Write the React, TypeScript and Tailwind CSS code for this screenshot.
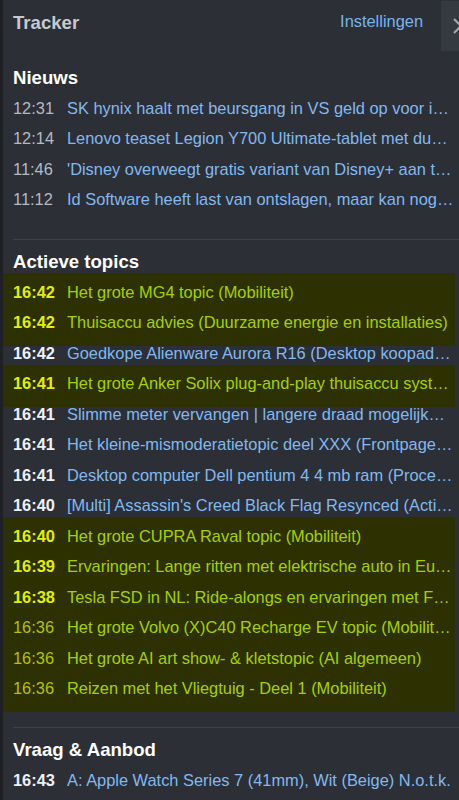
import React from 'react';

type Topic = {
  time: string;
  title: string;
  hot?: boolean; // highlighted (followed) topic
  dim?: boolean; // older highlighted entry, regular weight time
};

const news = [
  { time: '12:31', title: 'SK hynix haalt met beursgang in VS geld op voor investeringen' },
  { time: '12:14', title: 'Lenovo teaset Legion Y700 Ultimate-tablet met dubbele batterij' },
  { time: '11:46', title: "'Disney overweegt gratis variant van Disney+ aan te bieden'" },
  { time: '11:12', title: 'Id Software heeft last van ontslagen, maar kan nog steeds games maken' },
];

const topics: Topic[] = [
  { time: '16:42', title: 'Het grote MG4 topic (Mobiliteit)', hot: true },
  { time: '16:42', title: 'Thuisaccu advies (Duurzame energie en installaties)', hot: true },
  { time: '16:42', title: 'Goedkope Alienware Aurora R16 (Desktop koopadvies)' },
  { time: '16:41', title: 'Het grote Anker Solix plug-and-play thuisaccu systeem topic', hot: true },
  { time: '16:41', title: 'Slimme meter vervangen | langere draad mogelijk… (Elektra)' },
  { time: '16:41', title: 'Het kleine-mismoderatietopic deel XXX (Frontpage-feedback)' },
  { time: '16:41', title: 'Desktop computer Dell pentium 4 4 mb ram (Processors)' },
  { time: '16:40', title: "[Multi] Assassin's Creed Black Flag Resynced (Actie & Avontuur)" },
  { time: '16:40', title: 'Het grote CUPRA Raval topic (Mobiliteit)', hot: true },
  { time: '16:39', title: 'Ervaringen: Lange ritten met elektrische auto in Europa', hot: true },
  { time: '16:38', title: 'Tesla FSD in NL: Ride-alongs en ervaringen met FSD Supervised', hot: true },
  { time: '16:36', title: 'Het grote Volvo (X)C40 Recharge EV topic (Mobiliteit)', hot: true, dim: true },
  { time: '16:36', title: 'Het grote AI art show- & kletstopic (AI algemeen)', hot: true, dim: true },
  { time: '16:36', title: 'Reizen met het Vliegtuig - Deel 1 (Mobiliteit)', hot: true, dim: true },
];

const Heading = ({ children }: { children: React.ReactNode }) => (
  <h2 className="pl-[13px] h-[24px] leading-[24px] mb-[3px] text-[18.6px] font-bold text-white">{children}</h2>
);

const Divider = () => <div className="ml-[13px] h-px bg-[#3a4249]" />;

const NewsRow = ({ time, title }: { time: string; title: string }) => (
  <div className="flex items-center h-[30.5px] ml-[3px] mr-[4px] pl-[10px]">
    <span className="w-[54px] shrink-0 text-[#b4bac2]">{time}</span>
    <a className="truncate text-[#82b9ef]">{title}</a>
  </div>
);

const TopicRow = ({ topic, first, last }: { topic: Topic; first: boolean; last: boolean }) => {
  let timeCls = 'font-bold text-[#eef1f5]';
  if (topic.hot) timeCls = topic.dim ? 'text-[#b4c200]' : 'font-bold text-[#e2ef00]';

  // highlighted rows bleed a few px past the row box so runs join into one block
  let bleed = '';
  if (topic.hot) {
    if (first && last) bleed = 'shadow-[0_-4px_0_0_#2d3000,0_8px_0_0_#2d3000]';
    else if (first) bleed = 'shadow-[0_-4px_0_0_#2d3000]';
    else if (last) bleed = 'shadow-[0_8px_0_0_#2d3000]';
  }

  return (
    <div
      className={`flex items-center h-[30.5px] ml-[3px] mr-[4px] pl-[10px] ${
        topic.hot ? 'bg-[#2d3000]' : ''
      } ${bleed}`}
    >
      <span className={`w-[54px] shrink-0 ${timeCls}`}>{topic.time}</span>
      <a className={`truncate ${topic.hot ? 'text-[#a5d000]' : 'text-[#82b9ef]'}`}>{topic.title}</a>
    </div>
  );
};

const App: React.FC = () => {
  return (
    <div
      className="w-[459px] h-[800px] overflow-hidden bg-[#2c2f36] border-l-[3px] border-[#1f2125] text-[16.4px]"
      style={{ fontFamily: '"Liberation Sans", Arial, sans-serif' }}
    >
      {/* Header */}
      <div className="flex items-start h-[66px] -ml-[3px]">
        <div className="flex-1 flex items-center h-[46px] pl-[13px]">
          <span className="text-[18.6px] font-bold text-[#c6cacf]">Tracker</span>
        </div>
        <a className="h-[43px] flex items-center text-[#79b3ef] mr-[18px]">Instellingen</a>
        <button className="mt-px w-[18px] h-[50px] bg-[#353a40] overflow-hidden flex items-center shrink-0">
          <svg width="16" height="16" viewBox="0 0 16 16" className="ml-[12px] shrink-0" fill="none">
            <path d="M1 1l14 14M15 1L1 15" stroke="#a3a8ad" strokeWidth="2" />
          </svg>
        </button>
      </div>

      {/* Nieuws */}
      <div className="-ml-[3px]">
        <Heading>Nieuws</Heading>
        {news.map((n) => (
          <NewsRow key={n.title} time={n.time} title={n.title} />
        ))}
      </div>

      <div className="-ml-[3px] mt-[24px] mb-[10px]">
        <Divider />
      </div>

      {/* Actieve topics */}
      <div className="-ml-[3px]">
        <Heading>Actieve topics</Heading>
        {topics.map((t, i) => (
          <TopicRow
            key={t.title}
            topic={t}
            first={!!t.hot && !topics[i - 1]?.hot}
            last={!!t.hot && !topics[i + 1]?.hot}
          />
        ))}
      </div>

      <div className="-ml-[3px] mt-[23px] mb-[10px]">
        <Divider />
      </div>

      {/* Vraag & Aanbod */}
      <div className="-ml-[3px]">
        <Heading>Vraag &amp; Aanbod</Heading>
        <TopicRow
          topic={{ time: '16:43', title: 'A: Apple Watch Series 7 (41mm), Wit (Beige) N.o.t.k.' }}
          first={false}
          last={false}
        />
      </div>
    </div>
  );
};

export default App;
